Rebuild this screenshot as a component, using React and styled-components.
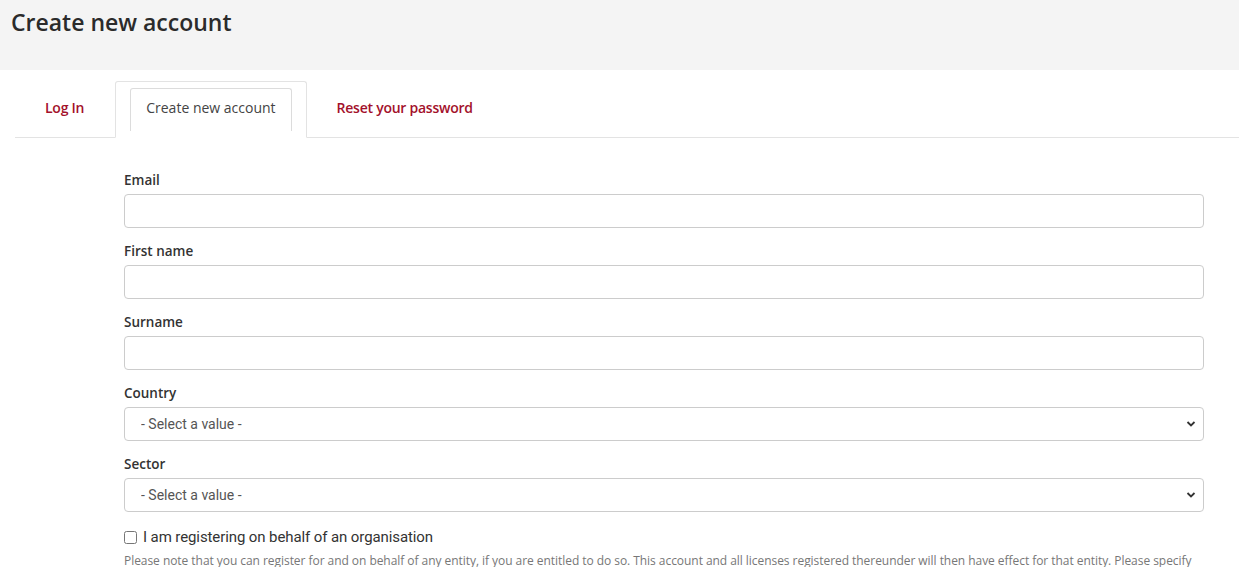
import React from 'react'
import styled, { createGlobalStyle } from 'styled-components'

const GlobalStyle = createGlobalStyle`
  html, body {
    margin: 0;
    padding: 0;
    background: #fff;
    font-family: "Open Sans", "Liberation Sans", sans-serif;
    color: #333;
  }
  * { box-sizing: border-box; }
`

const Header = styled.header`
  background: #f4f4f4;
  height: 70px;
  padding: 5px 11px 0;
`

const Title = styled.h1`
  margin: 0;
  font-size: 23px;
  font-weight: 600;
  line-height: 34px;
  color: #2b2b2b;
`

const Main = styled.main`
  padding: 11px 0 0 15px;
`

const Tabs = styled.ul`
  display: flex;
  align-items: flex-end;
  list-style: none;
  margin: 0;
  padding: 0;
  height: 57px;
  border-bottom: 1px solid #e3e3e3;
`

const Tab = styled.li`
  height: 57px;
  margin-bottom: -1px;
  display: flex;
  align-items: flex-start;
  padding: ${p => (p.$active ? '6px 14px 0' : '0')};
  border: 1px solid ${p => (p.$active ? '#e3e3e3' : 'transparent')};
  border-bottom: ${p => (p.$active ? '1px solid #fff' : 'none')};
  border-radius: 3px 3px 0 0;
  background: ${p => (p.$active ? '#fff' : 'transparent')};
`

const TabLink = styled.a`
  display: block;
  font-size: 14px;
  line-height: 20px;
  text-decoration: none;
  color: ${p => (p.$active ? '#444' : '#a3112b')};
  font-weight: ${p => (p.$active ? 400 : 600)};
  letter-spacing: ${p => (p.$active ? '0' : '-0.25px')};
  padding: ${p => (p.$active ? '9px 15px 13px' : '16px 30px 0 29px')};
  border: ${p => (p.$active ? '1px solid #dcdcdc' : 'none')};
  border-bottom: none;
  border-radius: 3px 3px 0 0;
`

const Form = styled.form`
  width: 1080px;
  margin: 32px 0 0 109px;
`

const Field = styled.div`
  margin-bottom: 13px;
`

const Label = styled.label`
  display: block;
  font-size: 13.5px;
  font-weight: 600;
  line-height: 21px;
  margin-bottom: 3px;
  color: #333;
`

const Input = styled.input`
  display: block;
  width: 100%;
  height: 34px;
  border: 1px solid #ccc;
  border-radius: 4px;
  padding: 6px 12px;
  font-size: 14px;
  background: #fff;
`

const SelectWrap = styled.div`
  position: relative;
`

const Select = styled.select`
  display: block;
  width: 100%;
  height: 34px;
  border: 1px solid #ccc;
  border-radius: 4px;
  padding: 0 12px 0 16px;
  font-family: Roboto, "Liberation Sans", sans-serif;
  font-size: 14px;
  color: #555;
  background: #fff;
  appearance: none;
`

const Chevron = styled.svg`
  position: absolute;
  right: 8px;
  top: 13px;
  width: 10px;
  height: 8px;
  pointer-events: none;
`

const CheckRow = styled.label`
  display: flex;
  align-items: center;
  gap: 6px;
  margin-top: 16px;
  font-family: Roboto, "Liberation Sans", sans-serif;
  font-size: 15px;
  letter-spacing: -0.1px;
  color: #333;
`

const Box = styled.input`
  margin: 1px 0 0;
  width: 13px;
  height: 13px;
`

const Note = styled.p`
  margin: 6px 0 0;
  font-size: 12px;
  line-height: 18px;
  letter-spacing: -0.05px;
  color: #777;
`

const SelectField = ({ label }) => (
  <Field>
    <Label>{label}</Label>
    <SelectWrap>
      <Select defaultValue="">
        <option value="">- Select a value -</option>
      </Select>
      <Chevron viewBox="0 0 10 8">
        <path d="M1.5 2 L5 5.5 L8.5 2" fill="none" stroke="#333" strokeWidth="1.8" />
      </Chevron>
    </SelectWrap>
  </Field>
)

export default function App () {
  return (
    <>
      <GlobalStyle />
      <Header>
        <Title>Create new account</Title>
      </Header>
      <Main>
        <Tabs>
          <Tab><TabLink href="#">Log In</TabLink></Tab>
          <Tab $active><TabLink $active href="#">Create new account</TabLink></Tab>
          <Tab><TabLink href="#">Reset your password</TabLink></Tab>
        </Tabs>
        <Form>
          <Field>
            <Label>Email</Label>
            <Input type="email" />
          </Field>
          <Field>
            <Label>First name</Label>
            <Input type="text" />
          </Field>
          <Field>
            <Label>Surname</Label>
            <Input type="text" />
          </Field>
          <SelectField label="Country" />
          <SelectField label="Sector" />
          <CheckRow>
            <Box type="checkbox" />
            I am registering on behalf of an organisation
          </CheckRow>
          <Note>
            Please note that you can register for and on behalf of any entity, if you are entitled to do so. This account and all licenses registered thereunder will then have effect for that entity. Please specify
          </Note>
        </Form>
      </Main>
    </>
  )
}
